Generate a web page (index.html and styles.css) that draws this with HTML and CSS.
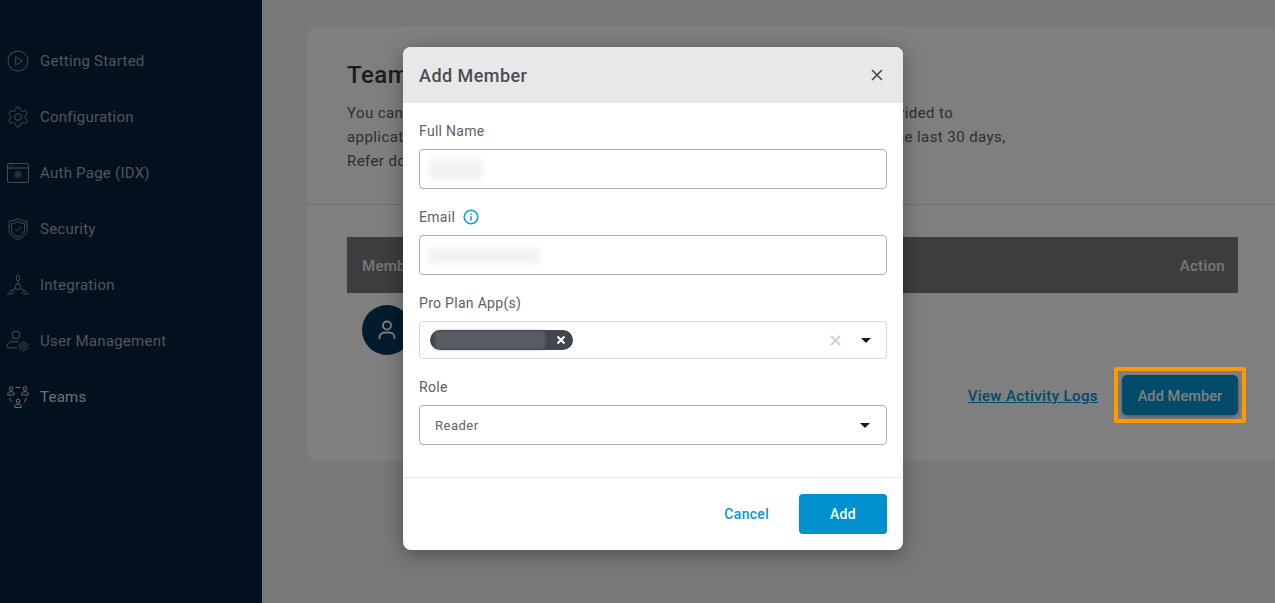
FILE: index.html
```html
<!DOCTYPE html>
<html lang="en">
<head>
    <meta charset="UTF-8">
    <title>Teams</title>
    <link rel="stylesheet" href="styles.css">
</head>
<body>
    <svg class="defs" width="0" height="0">
        <symbol id="gear" viewBox="0 0 24 24">
            <path vector-effect="non-scaling-stroke" d="M12.22 2h-.44a2 2 0 0 0-2 2v.18a2 2 0 0 1-1 1.73l-.43.25a2 2 0 0 1-2 0l-.15-.08a2 2 0 0 0-2.73.73l-.22.38a2 2 0 0 0 .73 2.73l.15.1a2 2 0 0 1 1 1.72v.51a2 2 0 0 1-1 1.74l-.15.09a2 2 0 0 0-.73 2.73l.22.38a2 2 0 0 0 2.73.73l.15-.08a2 2 0 0 1 2 0l.43.25a2 2 0 0 1 1 1.73V20a2 2 0 0 0 2 2h.44a2 2 0 0 0 2-2v-.18a2 2 0 0 1 1-1.73l.43-.25a2 2 0 0 1 2 0l.15.08a2 2 0 0 0 2.73-.73l.22-.39a2 2 0 0 0-.73-2.73l-.15-.08a2 2 0 0 1-1-1.74v-.5a2 2 0 0 1 1-1.74l.15-.09a2 2 0 0 0 .73-2.73l-.22-.38a2 2 0 0 0-2.73-.73l-.15.08a2 2 0 0 1-2 0l-.43-.25a2 2 0 0 1-1-1.73V4a2 2 0 0 0-2-2z"/>
            <circle vector-effect="non-scaling-stroke" cx="12" cy="12" r="3.4"/>
        </symbol>
    </svg>

    <div class="shell">
        <nav class="sidebar">
            <a class="nav-item">
                <svg class="nav-icon" viewBox="0 0 24 24"><circle cx="12" cy="12" r="10"/><path d="M9.7 7.8v8.4l6.6-4.2z"/></svg>
                <span>Getting Started</span>
            </a>
            <a class="nav-item">
                <svg class="nav-icon" viewBox="0 0 24 24"><use href="#gear"/></svg>
                <span>Configuration</span>
            </a>
            <a class="nav-item">
                <svg class="nav-icon" viewBox="0 0 24 24"><rect x="1.500" y="2.500" width="21" height="19" rx="1.500"/><path d="M1.500 7h21M3.500 4.800h1M5.800 4.800h1"/><use href="#gear" x="8" y="9.500" width="8" height="8"/></svg>
                <span>Auth Page (IDX)</span>
            </a>
            <a class="nav-item">
                <svg class="nav-icon" viewBox="0 0 24 24"><path d="M12 1.500c3 1.800 6 2.500 9 2.600v8.400c0 4.500-4 8-9 10-5-2-9-5.500-9-10V4.100c3-.1 6-.8 9-2.600z"/><path d="M12 4.500c2.200 1.200 4.300 1.800 6.500 2v6c0 3.300-3 5.800-6.500 7.400-3.500-1.600-6.500-4.100-6.500-7.400v-6c2.200-.2 4.300-.8 6.500-2z"/><path d="M9 11.800l2.200 2.200 4-4.300"/></svg>
                <span>Security</span>
            </a>
            <a class="nav-item">
                <svg class="nav-icon" viewBox="0 0 24 24"><circle cx="12" cy="13.800" r="2.800"/><path d="M12 11V7.500M9.600 15.300l-3.200 2M14.400 15.300l3.200 2"/><rect x="10.400" y="2.500" width="3.200" height="5" rx="1.500"/><path d="M12 .8v1.700"/><path d="M6.400 17.300l-2.200 1-.3 2.400 2.300.6 1.600-1.700zM17.600 17.300l2.200 1 .3 2.400-2.300.6-1.600-1.700zM3.900 20.700L1 21.400M20.100 20.700l2.900.7"/></svg>
                <span>Integration</span>
            </a>
            <a class="nav-item">
                <svg class="nav-icon" viewBox="0 0 24 24"><circle cx="10" cy="6" r="4"/><path d="M1 18.800v-1.300c0-2.800 2.500-4.800 5-4.800h6.500M1 18.800h10"/><use href="#gear" x="12" y="12" width="11" height="11"/></svg>
                <span>User Management</span>
            </a>
            <a class="nav-item nav-item-active">
                <svg class="nav-icon" viewBox="0 0 24 24"><circle cx="5" cy="3.500" r="1.800"/><circle cx="19" cy="3.500" r="1.800"/><circle cx="12" cy="16" r="1.800"/><path d="M1.800 10V8.500c0-1 1-1.700 2-1.700h2.400c1 0 2 .7 2 1.700V10zM15.800 10V8.500c0-1 1-1.700 2-1.700h2.400c1 0 2 .7 2 1.700V10zM8.800 22.500V21c0-1 1-1.700 2-1.700h2.400c1 0 2 .7 2 1.700v1.500zM9.500 2.500h5M3.500 13c.5 1.500 1.300 2.800 2.500 4M20.500 13c-.5 1.500-1.300 2.800-2.500 4"/></svg>
                <span>Teams</span>
            </a>
        </nav>

        <main class="main">
            <section class="card">
                <header class="card-head">
                    <h1 class="card-title">Teams</h1>
                    <p class="card-line">You can add team members and give them access to manage the features provided to</p>
                    <p class="card-line">applications under your account. Activity of each team member is logged for the last 30 days,</p>
                    <p class="card-line">Refer documentation for more details.</p>
                </header>
                <div class="card-body">
                    <div class="table-head">
                        <span>Member</span>
                        <span>Action</span>
                    </div>
                    <div class="table-row">
                        <span class="avatar">
                            <svg viewBox="0 0 24 24"><circle cx="12" cy="7.500" r="4"/><path d="M4.500 21v-1.500c0-3 2.500-5 5-5h5c2.500 0 5 2 5 5V21"/></svg>
                        </span>
                    </div>
                    <div class="card-actions">
                        <a class="logs-link">View Activity Logs</a>
                        <button class="add-member-btn">Add Member</button>
                    </div>
                </div>
            </section>
        </main>
    </div>

    <div class="overlay"></div>
    <div class="highlight"></div>

    <div class="modal">
        <div class="modal-head">
            <h2 class="modal-title">Add Member</h2>
            <svg class="modal-close" viewBox="0 0 12 12"><path d="M1 1l10 10M11 1L1 11"/></svg>
        </div>
        <div class="modal-body">
            <label class="field-label">Full Name</label>
            <div class="input">
                <span class="blur-text blur-name"></span>
            </div>

            <label class="field-label">
                Email
                <svg class="info-icon" viewBox="0 0 16 16"><circle cx="8" cy="8" r="6.800"/><path d="M8 7.200v4.300M8 4.400v1.300"/></svg>
            </label>
            <div class="input">
                <span class="blur-text blur-email"></span>
            </div>

            <label class="field-label">Pro Plan App(s)</label>
            <div class="input input-multi">
                <span class="chip">
                    <span class="chip-blur"></span>
                    <svg class="chip-x" viewBox="0 0 10 10"><path d="M1.500 1.500l7 7M8.500 1.500l-7 7"/></svg>
                </span>
                <svg class="clear-x" viewBox="0 0 12 12"><path d="M1 1l10 10M11 1L1 11"/></svg>
                <span class="caret"></span>
            </div>

            <label class="field-label">Role</label>
            <div class="input input-select">
                <span>Reader</span>
                <span class="caret"></span>
            </div>
        </div>
        <div class="modal-foot">
            <a class="cancel-link">Cancel</a>
            <button class="add-btn">Add</button>
        </div>
    </div>
</body>
</html>
```

FILE: styles.css
```css
* {
    box-sizing: border-box;
}
html, body {
    height: 100%;
}
body {
    font-family: Roboto, "Liberation Sans", sans-serif;
    background-color: #eef1f0;
    color: #333;
    margin: 0;
    overflow: hidden;
}
.defs {
    position: absolute;
}
.shell {
    display: flex;
    height: 603px;
}

/* sidebar */
.sidebar {
    width: 262px;
    flex-shrink: 0;
    padding-top: 33px;
    background-color: #07233d;
}
.nav-item {
    display: flex;
    align-items: center;
    gap: 10px;
    height: 56px;
    padding-left: 6px;
    font-size: 15px;
    letter-spacing: 0.25px;
    color: #a4a9ad;
}
.nav-icon {
    width: 24px;
    height: 24px;
    fill: none;
    stroke: #8f9499;
    stroke-width: 1;
    overflow: visible;
}
.nav-item-active {
    color: #dcdee0;
}
.nav-item-active .nav-icon {
    stroke: #dcdee0;
}

/* main card */
.main {
    flex: 1;
    padding: 27px 0 0 45px;
    min-width: 0;
}
.card {
    width: 971px;
    background-color: #fff;
    border-radius: 10px;
}
.card-head {
    padding: 31px 40px 31px;
    border-bottom: 1px solid #dfe1e3;
}
.card-title {
    margin: 0 0 9px;
    font-size: 24px;
    line-height: 34px;
    font-weight: 500;
    letter-spacing: 0.5px;
    color: #43372c;
}
.card-line {
    margin: 0;
    font-size: 15px;
    line-height: 24px;
    letter-spacing: 0.42px;
    color: #5b5d60;
}
.card-body {
    padding: 32px 40px 46px;
}
.table-head {
    display: flex;
    justify-content: space-between;
    align-items: center;
    height: 56px;
    padding: 2px 13px 0 15px;
    background-color: #7b7b7f;
    color: #eee;
    font-size: 15px;
    font-weight: 500;
    letter-spacing: 0.3px;
}
.table-row {
    height: 82px;
    padding: 12px 15px;
}
.avatar {
    display: flex;
    align-items: center;
    justify-content: center;
    width: 50px;
    height: 50px;
    border-radius: 50%;
    background-color: #07395b;
}
.avatar svg {
    width: 24px;
    height: 24px;
    fill: none;
    stroke: #fff;
    stroke-width: 1.800;
}
.card-actions {
    display: flex;
    justify-content: flex-end;
    align-items: center;
    gap: 24px;
}
.logs-link {
    padding-top: 1px;
    font-size: 15px;
    font-weight: 500;
    letter-spacing: 0.4px;
    color: #0094d4;
    text-decoration: underline;
}
.add-member-btn {
    width: 116px;
    height: 40px;
    padding-top: 3px;
    border: none;
    border-radius: 5px;
    background-color: #0094d4;
    box-shadow: 0 2px 4px rgba(0, 0, 0, 0.3);
    color: #fff;
    font: 500 14.5px Roboto, sans-serif;
    letter-spacing: 0.1px;
}

/* dimmed layer, then the things sitting above it */
.overlay {
    position: absolute;
    inset: 0;
    background-color: rgba(0, 0, 0, 0.5);
}
.highlight {
    position: absolute;
    left: 1114px;
    top: 367px;
    width: 132px;
    height: 56px;
    border: 4px solid #ff9900;
    border-radius: 2px;
}

/* modal */
.modal {
    position: absolute;
    left: 403px;
    top: 47px;
    width: 500px;
    border-radius: 8px;
    background-color: #fff;
    box-shadow: 0 4px 20px rgba(0, 0, 0, 0.35);
    overflow: hidden;
}
.modal-head {
    display: flex;
    justify-content: space-between;
    align-items: center;
    height: 56px;
    padding: 0 20px 0 16px;
    background-color: #e7e8ea;
}
.modal-title {
    margin: 0;
    font-size: 18px;
    font-weight: 500;
    letter-spacing: 0.45px;
    color: #4a4d52;
}
.modal-close {
    width: 12px;
    height: 12px;
    fill: none;
    stroke: #45484d;
    stroke-width: 1.600;
}
.modal-body {
    padding: 18px 16px 32px;
}
.field-label {
    display: flex;
    align-items: center;
    gap: 8px;
    height: 20px;
    margin-bottom: 8px;
    font-size: 14px;
    letter-spacing: 0.3px;
    color: #5d6064;
}
.info-icon {
    width: 16px;
    height: 16px;
    fill: none;
    stroke: #1a9ad9;
    stroke-width: 1.600;
}
.input {
    display: flex;
    align-items: center;
    height: 40px;
    margin-bottom: 18px;
    padding: 0 15px;
    border: 1px solid #adb0b3;
    border-radius: 4px;
    font-size: 13px;
    letter-spacing: 0.5px;
    color: #5f6266;
}
.input:last-child {
    margin-bottom: 0;
}
.blur-text {
    display: block;
    background-color: #f2f2f2;
    filter: blur(3px);
}
.blur-name {
    width: 54px;
    height: 20px;
    margin-left: -6px;
}
.blur-email {
    width: 112px;
    height: 15px;
    margin-left: -7px;
}
.input-multi {
    height: 38px;
    padding: 0 15px 0 10px;
    border-color: #d5d8dc;
}
.chip {
    display: flex;
    align-items: center;
    justify-content: space-between;
    width: 143px;
    height: 20px;
    padding: 0 7px 0 5px;
    border-radius: 10px;
    background-color: #42474d;
}
.chip-blur {
    width: 110px;
    height: 18px;
    background-color: #585d64;
    filter: blur(1.500px);
}
.chip-x {
    width: 10px;
    height: 10px;
    fill: none;
    stroke: #fff;
    stroke-width: 2;
}
.clear-x {
    width: 11px;
    height: 11px;
    margin-left: auto;
    margin-right: 20px;
    fill: none;
    stroke: #ccc;
    stroke-width: 2;
}
.caret {
    width: 0;
    height: 0;
    border-left: 5px solid transparent;
    border-right: 5px solid transparent;
    border-top: 5px solid #15181c;
}
.input-select {
    justify-content: space-between;
    padding-right: 16px;
}
.modal-foot {
    display: flex;
    justify-content: flex-end;
    align-items: center;
    gap: 30px;
    padding: 16px;
    border-top: 1px solid #e6e8ea;
}
.cancel-link {
    font-size: 14px;
    font-weight: 500;
    letter-spacing: 0.3px;
    color: #0f94d4;
}
.add-btn {
    width: 88px;
    height: 40px;
    border: none;
    border-radius: 4px;
    background-color: #0090d0;
    color: #fff;
    font: 500 14px Roboto, sans-serif;
    letter-spacing: 0.3px;
}
```
